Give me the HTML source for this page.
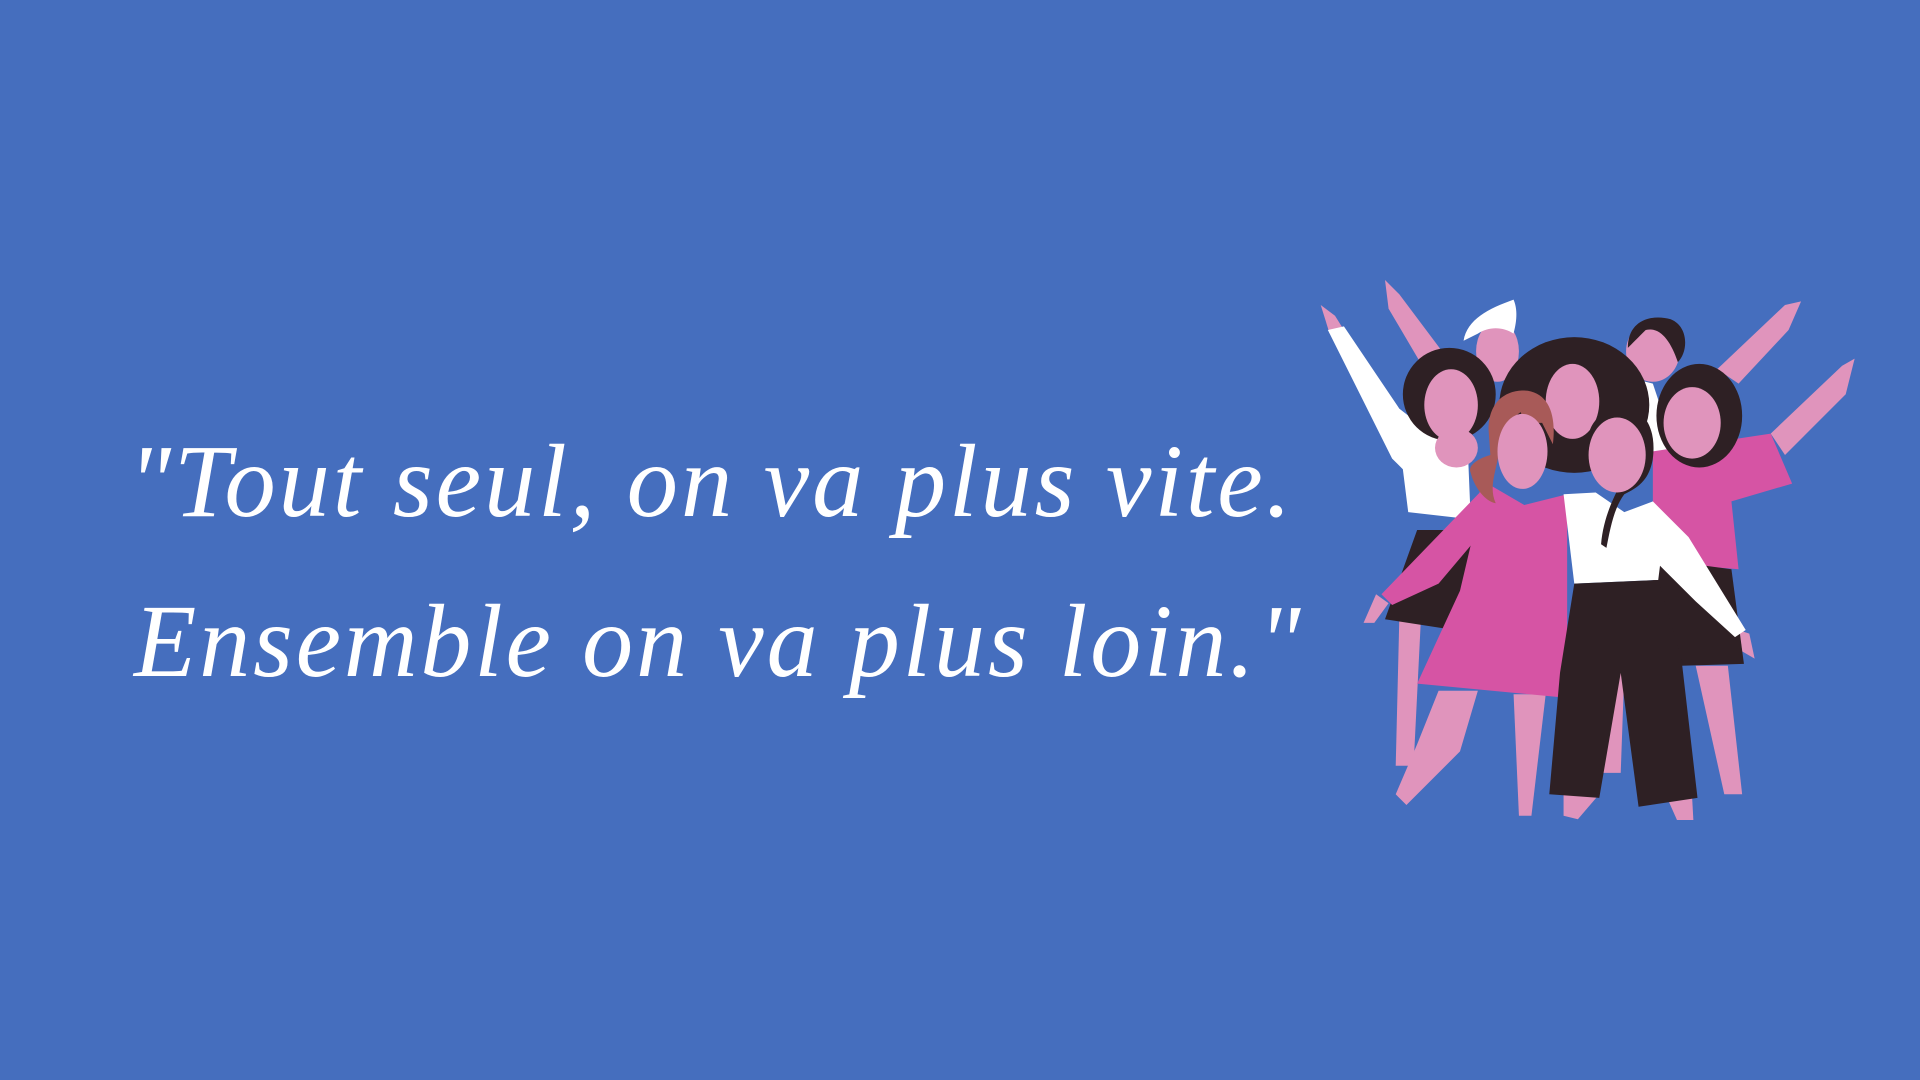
<!DOCTYPE html>
<html><head><meta charset="utf-8"><style>
html,body{margin:0;padding:0;}
body{width:1920px;height:1080px;background:#456EBE;position:relative;overflow:hidden;font-family:"Liberation Serif",serif;}
.q{position:absolute;color:#fff;font-style:italic;font-size:104px;white-space:nowrap;line-height:1;transform-origin:left top;}
svg{position:absolute;}
</style></head><body>
<div class="q" style="left:128px;top:430px;letter-spacing:3px;transform:scaleX(0.985)">"Tout seul, on va plus vite.</div>
<div class="q" style="left:134px;top:590px;letter-spacing:3px;transform:scaleX(0.98)">Ensemble on va plus loin."</div>
<svg style="left:1310px;top:280px" width="560" height="540" viewBox="0 0 1568 1512">
<g fill="#E094BC">
<polygon points="210,0 250,40 370,200 320,250 220,80"/>
<polygon points="1330,70 1375,60 1340,140 1200,290 1140,250"/>
<polygon points="1490,240 1525,220 1500,320 1330,490 1290,430"/>
<polygon points="30,70 70,100 95,140 55,150"/>
<polygon points="250,950 310,960 290,1360 240,1360"/>
<polygon points="1080,1080 1170,1080 1210,1440 1160,1440"/>
<polygon points="840,1100 880,1100 870,1380 820,1380"/>
<polygon points="1200,980 1230,990 1245,1060 1210,1040"/>
<ellipse cx="525" cy="200" rx="60" ry="85"/>
<ellipse cx="960" cy="200" rx="75" ry="85"/>
</g>
<path fill="#fff" d="M430,170 C440,110 500,80 570,55 C585,90 575,130 570,150 C540,130 500,130 470,150 Z"/>
<path fill="#2E2024" d="M890,190 C890,110 960,95 1010,110 C1060,130 1060,200 1030,230 C1010,170 980,130 940,140 C920,160 900,180 890,190 Z"/>
<polygon fill="#fff" points="880,270 960,290 1020,470 960,500"/>
<polygon fill="#fff" points="50,140 95,130 250,360 340,430 440,430 450,670 275,650 260,530 230,500"/>
<polygon fill="#2E2024" points="300,700 470,700 470,990 210,950"/>
<ellipse cx="390" cy="320" rx="130" ry="130" fill="#2E2024"/>
<ellipse cx="395" cy="350" rx="75" ry="100" fill="#E094BC"/>
<ellipse cx="410" cy="470" rx="60" ry="55" fill="#E094BC"/>
<ellipse cx="740" cy="350" rx="210" ry="190" fill="#2E2024"/>
<ellipse cx="735" cy="340" rx="75" ry="105" fill="#E094BC"/>
<polygon fill="#D654A4" points="960,480 1290,430 1350,570 1180,620 1200,810 960,790"/>
<polygon fill="#2E2024" points="960,780 1180,810 1215,1075 1040,1080 960,1000"/>
<ellipse cx="1090" cy="380" rx="120" ry="145" fill="#2E2024"/>
<ellipse cx="1070" cy="400" rx="80" ry="100" fill="#E094BC"/>
<polygon fill="#E094BC" points="360,1150 470,1150 420,1320 270,1470 240,1440 300,1300"/>
<polygon fill="#E094BC" points="570,1160 660,1160 620,1500 585,1500"/>
<polygon fill="#D654A4" points="480,560 600,630 720,600 720,1170 300,1130 420,870 460,700"/>
<polygon fill="#D654A4" points="480,590 200,880 230,910 360,850 470,720"/>
<polygon fill="#E094BC" points="185,880 220,905 180,960 150,960"/>
<path fill="#A85A58" d="M500,420 C500,330 560,305 610,310 C670,320 690,380 680,460 L650,400 C620,400 600,405 590,370 C560,390 540,430 530,480 C520,540 500,580 520,625 C490,620 460,580 450,540 C440,520 470,500 505,490 Z"/>
<ellipse cx="595" cy="480" rx="70" ry="105" fill="#E094BC"/>
<polygon fill="#E094BC" points="710,1440 810,1440 750,1510 710,1500"/>
<polygon fill="#E094BC" points="1000,1450 1070,1450 1075,1540 1040,1540"/>
<polygon fill="#fff" points="710,600 800,595 880,650 960,620 1060,720 1220,980 1190,1000 1080,900 980,800 975,840 740,850"/>
<polygon fill="#2E2024" points="740,850 975,840 1040,1060 1085,1450 920,1475 870,1100 810,1450 670,1440 700,1100"/>
<path fill="#2E2024" d="M780,470 C770,390 830,360 880,360 C940,360 970,420 960,500 C950,560 920,580 880,600 C850,640 840,700 830,750 L815,740 C820,680 840,630 860,590 C820,580 790,540 780,470 Z"/>
<ellipse cx="860" cy="490" rx="80" ry="105" fill="#E094BC"/>
</svg>
</body></html>
